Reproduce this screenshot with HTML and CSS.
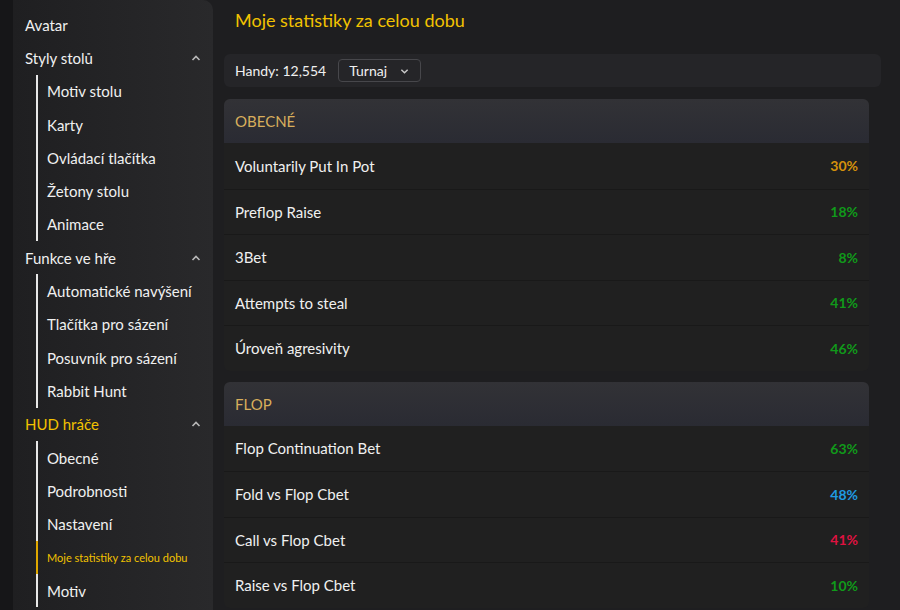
FILE: index.html
```html
<!DOCTYPE html>
<html lang="cs">
<head>
  <meta charset="UTF-8" />
  <meta name="viewport" content="width=device-width, initial-scale=1" />
  <title>Moje statistiky za celou dobu</title>
  <link rel="stylesheet" href="styles.css">
</head>
<body>

  <!-- Sidebar menu -->
  <nav class="sidebar">
    <div class="menu-item">Avatar</div>

    <div class="menu-group">
      Styly stolů
      <svg class="caret" viewBox="0 0 10 6"><path d="M1.5 5 L5 1.5 L8.5 5" /></svg>
    </div>
    <div class="submenu">
      <div class="sub-item">Motiv stolu</div>
      <div class="sub-item">Karty</div>
      <div class="sub-item">Ovládací tlačítka</div>
      <div class="sub-item">Žetony stolu</div>
      <div class="sub-item">Animace</div>
    </div>

    <div class="menu-group">
      Funkce ve hře
      <svg class="caret" viewBox="0 0 10 6"><path d="M1.5 5 L5 1.5 L8.5 5" /></svg>
    </div>
    <div class="submenu">
      <div class="sub-item">Automatické navýšení</div>
      <div class="sub-item">Tlačítka pro sázení</div>
      <div class="sub-item">Posuvník pro sázení</div>
      <div class="sub-item">Rabbit Hunt</div>
    </div>

    <div class="menu-group open">
      HUD hráče
      <svg class="caret" viewBox="0 0 10 6"><path d="M1.5 5 L5 1.5 L8.5 5" /></svg>
    </div>
    <div class="submenu">
      <div class="sub-item">Obecné</div>
      <div class="sub-item">Podrobnosti</div>
      <div class="sub-item">Nastavení</div>
      <div class="sub-item active">Moje statistiky za celou dobu</div>
      <div class="sub-item">Motiv</div>
    </div>
  </nav>

  <main class="content">
    <h1 class="page-title">Moje statistiky za celou dobu</h1>

    <div class="filter-bar">
      <span class="hands">Handy: 12,554</span>
      <div class="select">
        Turnaj
        <svg class="select-caret" viewBox="0 0 10 6"><path d="M1.5 1.5 L5 5 L8.5 1.5" /></svg>
      </div>
    </div>

    <!-- General stats -->
    <section class="stat-card">
      <div class="card-header">OBECNÉ</div>
      <div class="stat-row"><span>Voluntarily Put In Pot</span><span class="val orange">30%</span></div>
      <div class="stat-row"><span>Preflop Raise</span><span class="val green">18%</span></div>
      <div class="stat-row"><span>3Bet</span><span class="val green">8%</span></div>
      <div class="stat-row"><span>Attempts to steal</span><span class="val green">41%</span></div>
      <div class="stat-row"><span>Úroveň agresivity</span><span class="val green">46%</span></div>
    </section>

    <!-- Flop stats -->
    <section class="stat-card">
      <div class="card-header">FLOP</div>
      <div class="stat-row"><span>Flop Continuation Bet</span><span class="val green">63%</span></div>
      <div class="stat-row"><span>Fold vs Flop Cbet</span><span class="val blue">48%</span></div>
      <div class="stat-row"><span>Call vs Flop Cbet</span><span class="val red">41%</span></div>
      <div class="stat-row"><span>Raise vs Flop Cbet</span><span class="val green">10%</span></div>
    </section>
  </main>

</body>
</html>
```

FILE: styles.css
```css
body {
  font-family: Lato, 'Noto Sans', sans-serif;
  background: #1e1e20;
  color: #f0f0f0;
  margin: 0;
  height: 100vh;
  overflow: hidden;
  display: flex;
}

.sidebar {
  width: 200px;
  flex-shrink: 0;
  margin-left: 13px;
  padding: 8px 0 0 12px;
  box-sizing: border-box;
  background: linear-gradient(to right, #1f1f21, #29292b);
  border-top-right-radius: 10px;
  box-shadow: -13px 0 0 #161618;
  font-size: 15px;
}

.menu-item,
.menu-group {
  height: 33.3px;
  display: flex;
  align-items: center;
  justify-content: space-between;
  padding-right: 12px;
}

.menu-group.open {
  color: #f2c200;
}

.caret {
  width: 10px;
  height: 6px;
  fill: none;
  stroke: #b8b8b8;
  stroke-width: 1.6;
}

.submenu {
  margin-left: 11px;
}

.sub-item {
  height: 33.3px;
  display: flex;
  align-items: center;
  padding-left: 9px;
  border-left: 2px solid #e8e8e8;
}

.sub-item.active {
  border-left-color: #e0a800;
  color: #f2c200;
  font-size: 11px;
}

.content {
  flex: 1;
  padding: 8px 19px 0 11px;
  min-width: 0;
}

.page-title {
  margin: 0 0 22px 11px;
  font-size: 18px;
  font-weight: 400;
  line-height: 24px;
  color: #f2c200;
}

.filter-bar {
  height: 33px;
  background: #252528;
  border-radius: 6px;
  display: flex;
  align-items: center;
  padding-left: 11px;
  gap: 12px;
  font-size: 14px;
  margin-bottom: 12px;
}

.select {
  width: 83px;
  height: 23px;
  box-sizing: border-box;
  border: 1px solid #47474b;
  border-radius: 4px;
  display: flex;
  align-items: center;
  justify-content: space-between;
  padding: 0 11px 0 10px;
}

.select-caret {
  width: 9px;
  height: 6px;
  fill: none;
  stroke: #c8c8c8;
  stroke-width: 1.6;
}

.stat-card {
  margin-right: 12px;
  margin-bottom: 11px;
  border-radius: 6px;
  overflow: hidden;
  background: #202020;
}

.card-header {
  height: 44px;
  display: flex;
  align-items: center;
  padding-left: 11px;
  background: linear-gradient(to bottom, #323236, #2a2b33);
  color: #d8ae5c;
  font-size: 15px;
}

.stat-row {
  height: 45.5px;
  box-sizing: border-box;
  display: flex;
  align-items: center;
  justify-content: space-between;
  padding: 0 11px;
  font-size: 15px;
  border-top: 1px solid #191919;
}

.card-header + .stat-row {
  border-top: none;
}

.val {
  font-size: 14px;
  font-weight: 700;
}

.val.orange { color: #d4910c; }
.val.green  { color: #109a1a; }
.val.blue   { color: #1f9be2; }
.val.red    { color: #df1240; }
```
